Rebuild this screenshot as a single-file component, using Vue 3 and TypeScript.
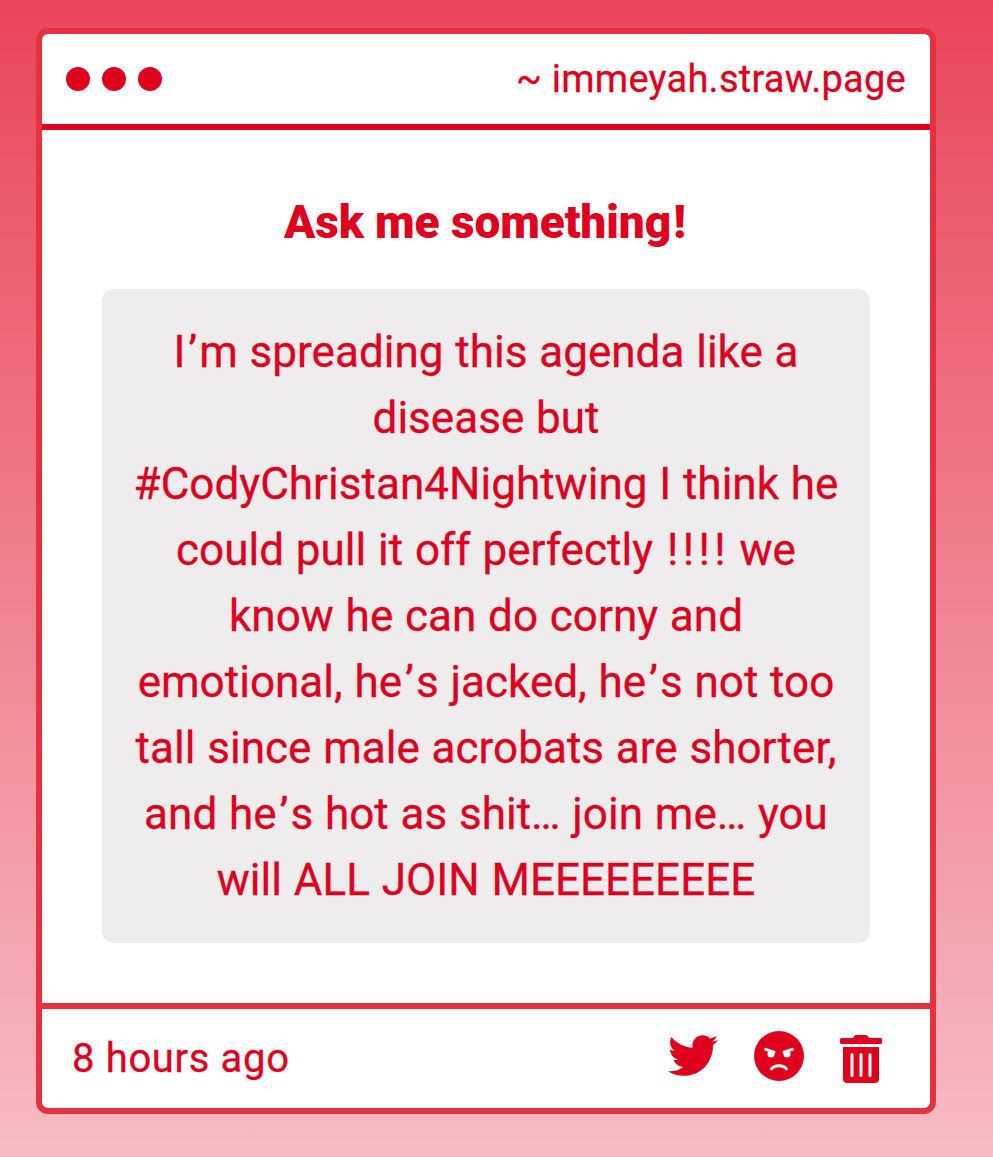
<script setup lang="ts">
const site = '~ immeyah.straw.page'
const title = 'Ask me something!'
const lines: string[] = [
  'I’m spreading this agenda like a',
  'disease but',
  '#CodyChristan4Nightwing I think he',
  'could pull it off perfectly !!!! we',
  'know he can do corny and',
  'emotional, he’s jacked, he’s not too',
  'tall since male acrobats are shorter,',
  'and he’s hot as shit… join me… you',
  'will ALL JOIN MEEEEEEEEE',
]

// Punctuation marks are split out so they can carry wider side bearings.
const pieces = (text: string): string[] => text.split(/([’!])/).filter(Boolean)
const markClass = (piece: string) => ({ quote: piece === '’', bang: piece === '!' })
</script>

<template>
  <main class="page">
    <article class="card">
      <header class="bar">
        <div class="dots"><i v-for="n in 3" :key="n" class="dot" /></div>
        <span class="site">{{ site }}</span>
      </header>
      <section class="body">
        <h1 class="title"><span v-for="(p, i) in pieces(title)" :key="i" :class="markClass(p)">{{ p }}</span></h1>
        <p class="message">
          <span v-for="line in lines" :key="line" class="line"><span v-for="(p, i) in pieces(line)" :key="i" :class="markClass(p)">{{ p }}</span></span>
        </p>
      </section>
      <footer class="foot">
        <span class="time">8 hours ago</span>
        <div class="actions">
          <svg class="bird" viewBox="0 48 512 416" aria-hidden="true">
            <path d="M459.37 151.716c.325 4.548.325 9.097.325 13.645 0 138.72-105.583 298.558-298.558 298.558-59.452 0-114.68-17.219-161.137-47.106 8.447.974 16.568 1.299 25.34 1.299 49.055 0 94.213-16.568 130.274-44.832-46.132-.975-84.792-31.188-98.112-72.772 6.498.974 12.995 1.624 19.818 1.624 9.421 0 18.843-1.3 27.614-3.573-48.081-9.747-84.143-51.98-84.143-102.985v-1.299c13.969 7.797 30.214 12.67 47.431 13.319-28.264-18.843-46.781-51.005-46.781-87.391 0-19.492 5.197-37.36 14.294-52.954 51.655 63.675 129.3 105.258 216.365 109.807-1.624-7.797-2.599-15.918-2.599-24.04 0-57.828 46.782-104.934 104.934-104.934 30.213 0 57.502 12.67 76.67 33.137 23.715-4.548 46.456-13.32 66.599-25.34-7.798 24.366-24.366 44.833-46.132 57.827 21.117-2.273 41.584-8.122 60.426-16.243-14.292 20.791-32.161 39.308-52.628 54.253z" />
          </svg>
          <svg class="angry" viewBox="0 0 50 50" aria-hidden="true">
            <circle cx="25" cy="25" r="25" />
            <g class="cut-line">
              <path d="M11.7 18.300 20 21.200M38.300 18.300 30 21.200" />
              <path d="M17.500 37.800c3.500-4 11.500-4 15 0" />
            </g>
            <g class="cut"><circle cx="17" cy="22.900" r="3.500" /><circle cx="33" cy="22.900" r="3.500" /></g>
          </svg>
          <svg class="trash" viewBox="0 0 42 48" aria-hidden="true">
            <path d="M1.500 3H13l1.400-2.200Q15 0 16 0h10q1 0 1.600.800L29 3h11.500q1.500 0 1.500 1.500v3Q42 9 40.500 9h-39Q0 9 0 7.500v-3Q0 3 1.500 3Z" />
            <path d="M3 12h36v31.500q0 4.500-4.500 4.500h-27Q3 48 3 43.500Z" />
            <path class="slots" d="M12 19.500v21M21 19.500v21M30 19.500v21" />
          </svg>
        </div>
      </footer>
    </article>
  </main>
</template>

<style>
body { margin: 0; }
</style>

<style scoped>
.page {
  box-sizing: border-box;
  height: 1157px;
  padding: 28px 57px 43px 36px;
  background: linear-gradient(#e9455b, #f6bcc4);
  font-family: Roboto, "Liberation Sans", sans-serif;
  color: #df001d;
}
.card {
  box-sizing: border-box;
  height: 1086px;
  display: flex;
  flex-direction: column;
  background: #fff;
  border: 6px solid #e5323e;
  border-radius: 12px;
}
.bar {
  box-sizing: border-box;
  height: 96px;
  display: flex;
  align-items: center;
  justify-content: space-between;
  padding: 0 24px;
  border-bottom: 6px solid #df001d;
}
.dots { display: flex; gap: 12px; }
.dot { width: 24px; height: 24px; border-radius: 50%; background: #df001d; }
.site, .message, .time { -webkit-text-stroke: 0.3px currentColor; }
.site { font-size: 38px; line-height: 46px; letter-spacing: 0.25px; }
.body { flex: 1; padding: 60px 60px 0; text-align: center; }
.title { margin: 0; height: 99px; font-size: 46px; line-height: 65px; font-weight: 900; letter-spacing: -0.1px; }
.message {
  margin: 0;
  padding: 30px 0;
  border-radius: 12px;
  background: #eeecec;
  font-size: 44px;
  line-height: 66px;
  letter-spacing: 0.03px;
  word-spacing: 0.8px;
}
.line { display: block; white-space: nowrap; }
.quote { margin: 0 2.2px 0 2.8px; }
.bang { margin: 0 2.2px; }
.foot {
  box-sizing: border-box;
  height: 105px;
  display: flex;
  align-items: center;
  justify-content: space-between;
  padding: 0 48px 0 30px;
  border-top: 6px solid #e5323e;
}
.time { font-size: 40px; line-height: 48px; letter-spacing: 0.65px; }
.actions { display: flex; align-items: flex-start; gap: 36px; height: 55px; fill: #df001d; }
.bird { width: 50px; height: 41px; margin-top: 4px; }
.angry { width: 50px; height: 50px; }
.trash { width: 42px; height: 48px; margin-top: 4px; }
.cut { fill: #fff; }
.cut-line, .slots { fill: none; stroke: #fff; stroke-width: 3; stroke-linecap: round; }
</style>
